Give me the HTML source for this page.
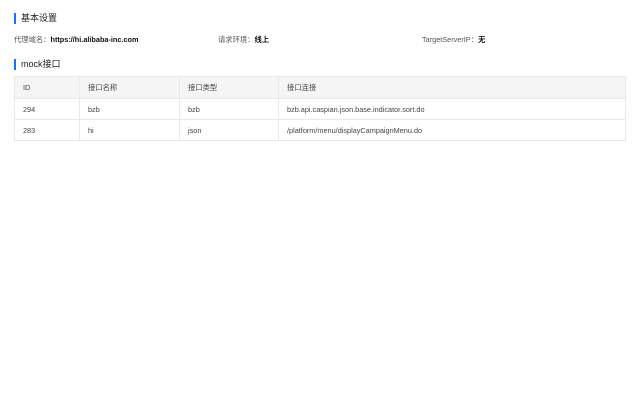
<!DOCTYPE html>
<html><head><meta charset="utf-8"><style>
body{margin:0;background:#fff;font-family:"Liberation Sans","Noto Sans CJK SC",sans-serif;color:#333;width:640px;height:400px;position:relative;overflow:hidden}
.t{position:absolute;left:14px;border-left:2px solid #1f6fff;padding-left:5px;font-size:9px;line-height:11px;color:#222}
.i{position:absolute;top:35px;font-size:7.3px;line-height:10px;color:#555}
.i b{color:#111}
table{position:absolute;left:14px;top:76px;width:612px;border-collapse:collapse;font-size:7.3px;color:#444;table-layout:fixed}
td,th{border:1px solid #e8e8e8;text-align:left;padding:0 0 0 8px;font-weight:normal}
th{background:#f5f5f5;height:21px}
td{height:20px}
</style></head><body>
<div class="t" style="top:13px">基本设置</div>
<div class="i" style="left:14px">代理域名：<b>https://hi.alibaba-inc.com</b></div>
<div class="i" style="left:218px">请求环境：<b>线上</b></div>
<div class="i" style="left:422px">TargetServerIP：<b>无</b></div>
<div class="t" style="top:59px">mock接口</div>
<table>
<colgroup><col style="width:65px"><col style="width:100px"><col style="width:99px"><col></colgroup>
<tr><th>ID</th><th>接口名称</th><th>接口类型</th><th>接口连接</th></tr>
<tr><td>294</td><td>bzb</td><td>bzb</td><td>bzb.api.caspian.json.base.indicator.sort.do</td></tr>
<tr><td>283</td><td>hi</td><td>json</td><td>/platform/menu/displayCampaignMenu.do</td></tr>
</table>
</body></html>
